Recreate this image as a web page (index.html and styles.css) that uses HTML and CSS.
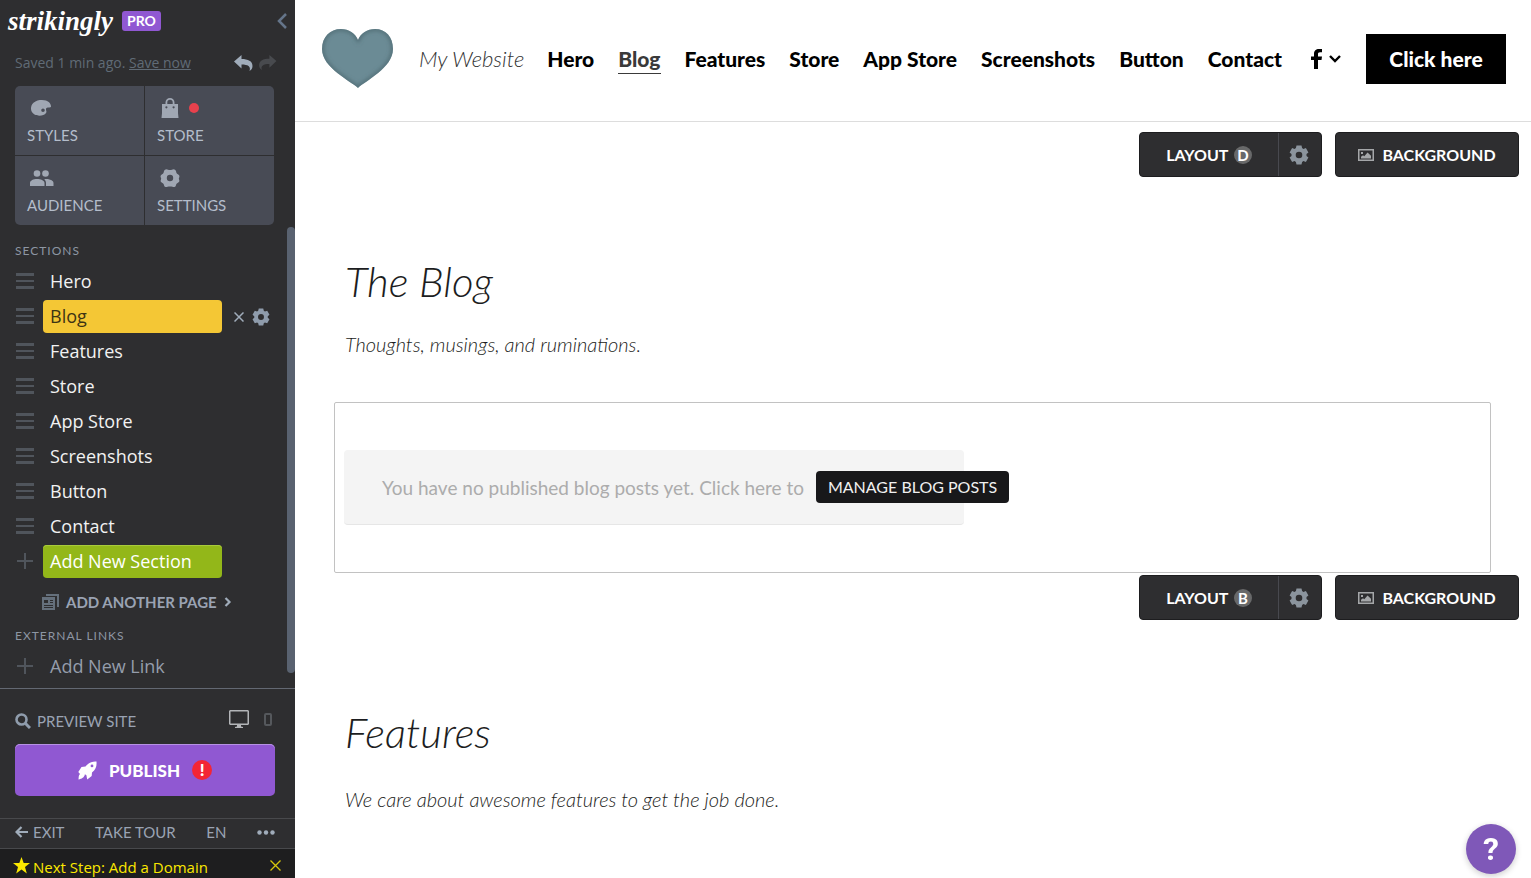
FILE: index.html
```html
<!DOCTYPE html>
<html lang="en">
<head>
    <meta charset="utf-8">
    <title>My Website - Strikingly Editor</title>
    <link rel="stylesheet" href="styles.css">
</head>
<body>

<!-- shared icons -->
<svg class="sprite" aria-hidden="true">
    <symbol id="gear" viewBox="0 0 20 20">
        <path fill-rule="evenodd" d="M7.500 0.500h5l.6 2.600 1.300.8 2.500-.8 2.500 4.300-1.900 1.700v1.800l1.900 1.700-2.500 4.300-2.500-.8-1.300.8-.6 2.600h-5l-.6-2.600-1.300-.8-2.500.8-2.500-4.300 1.900-1.700V9.100L.6 7.400l2.500-4.300 2.500.8 1.300-.8zM10 6.700a3.300 3.300 0 1 0 0 6.600 3.300 3.300 0 0 0 0-6.600z"/>
    </symbol>
    <symbol id="bars" viewBox="0 0 18 16">
        <path d="M0 0h18v3H0zM0 7h18v2H0zM0 13h18v3H0z"/>
    </symbol>
    <symbol id="plus" viewBox="0 0 18 16">
        <path d="M8 0h2v7h7v2h-7v7H8V9H1V7h7z"/>
    </symbol>
    <symbol id="undo" viewBox="0 0 19 16">
        <path d="M0 6.500L7.500 0v4C14 4 18.500 6 18.500 11c0 2-1 4-3 5 1.600-4.500-1.500-6.500-8-6.500v4z"/>
    </symbol>
    <symbol id="picture" viewBox="0 0 16 12">
        <path fill-rule="evenodd" d="M0 0h16v12H0zM1.500 1.500v9h13v-9zM3 9.500V7.800l2-1.500 1.300 1L9.500 3.500 13 6.800v2.700zM3 3h2v2H3z"/>
    </symbol>
</svg>

<div class="editor">
    <aside class="sidebar">
        <div class="brand">
            <span class="logo">strikingly</span>
            <span class="pro">PRO</span>
            <button class="collapse" aria-label="Collapse">
                <svg width="10" height="16" viewBox="0 0 10 16"><path d="M9 1L2 8l7 7" fill="none" stroke="#65758a" stroke-width="2.500"/></svg>
            </button>
        </div>

        <div class="saved">
            <span>Saved 1 min ago. <a href="#">Save now</a></span>
            <div class="history">
                <button aria-label="Undo"><svg width="19" height="16" fill="#a0acba"><use href="#undo"/></svg></button>
                <button aria-label="Redo"><svg width="18" height="15" viewBox="0 0 19 16" fill="#484a4e"><path d="M18.500 6.500L11 0v4C4.500 4 0 6 0 11c0 2 1 4 3 5-1.600-4.500 1.500-6.500 8-6.500v4z"/></svg></button>
            </div>
        </div>

        <div class="tiles">
            <button class="tile">
                <span class="tile-icon">
                    <svg width="22" height="18" viewBox="0 0 22 18"><path fill-rule="evenodd" d="M12 1c6 0 9 3 9 7-2 1-5-.5-5 2.500 0 1.500 1 2 0 3.500-2 3-8 3.500-11.500 1.500C0 13 0 7 3.500 3.800 6 1.500 9 1 12 1zm1 8.500a1.800 1.800 0 1 0 0 3.600 1.800 1.800 0 0 0 0-3.600z"/></svg>
                </span>
                STYLES
            </button>
            <button class="tile">
                <span class="tile-icon">
                    <svg width="20" height="22" viewBox="0 0 20 22"><path fill-rule="evenodd" d="M2 7h3.500V5.500a4.500 4.500 0 0 1 9 0V7H18v9l.5 5h-17L2 16zm5.300 0h5.400V5.500a2.700 2.700 0 0 0-5.400 0zM6.400 9.200a1.100 1.100 0 1 0 0 2.200 1.100 1.100 0 0 0 0-2.200zm7.200 0a1.100 1.100 0 1 0 0 2.200 1.100 1.100 0 0 0 0-2.200z"/></svg>
                    <span class="dot"></span>
                </span>
                STORE
            </button>
            <button class="tile">
                <span class="tile-icon">
                    <svg width="24" height="18" viewBox="0 0 24 18"><circle cx="7" cy="4.500" r="3.300"/><circle cx="15.500" cy="4.500" r="3.300"/><path d="M0 17v-3c0-2.500 3.500-4 7-4s7.500 1.500 7.500 4v3zM16 17v-3c0-1.500-.6-2.800-1.800-3.800C19 9.700 23.500 11.500 23.500 14v3z"/></svg>
                </span>
                AUDIENCE
            </button>
            <button class="tile">
                <span class="tile-icon"><svg width="20" height="20" viewBox="0 0 20 20"><path fill-rule="evenodd" d="M6.500 1.200c1 0 2 .9 3.500.9s2.500-.9 3.500-.9 2.300.9 2.500 1.800c.2 1.700.6 2.400 1.900 3.300 1.600 1 1.900 2 1.300 3.200-.5 1-.5 1.500 0 2.500.5 1.200 0 2.200-1.600 3-1.300.8-1.500 1.400-1.700 2.500-.4 1.500-2 1.800-3.400 1.300-1.500-.5-3.500-.5-5 0-1.400.5-3 .2-3.400-1.300-.2-1.100-.4-1.700-1.700-2.500-1.600-.8-2.100-1.800-1.600-3 .5-1 .5-1.500 0-2.500C.2 8.300.5 7.300 2.100 6.300 3.400 5.400 3.800 4.700 4 3c.2-.9 1.500-1.800 2.500-1.800zM10 6.800a3.200 3.200 0 1 0 0 6.400 3.200 3.200 0 0 0 0-6.400z"/></svg></span>
                SETTINGS
            </button>
        </div>

        <nav class="sections">
            <h3>SECTIONS</h3>
            <ul>
                <li><svg class="handle"><use href="#bars"/></svg><a href="#">Hero</a></li>
                <li class="current">
                    <svg class="handle"><use href="#bars"/></svg><a href="#">Blog</a>
                    <button aria-label="Remove"><svg width="10" height="10" viewBox="0 0 10 10"><path d="M0.500 0.500l9 9M9.500 0.500l-9 9" stroke="#a0acba" stroke-width="1.500"/></svg></button>
                    <button aria-label="Section settings"><svg width="18" height="18" fill="#8f9cac"><use href="#gear"/></svg></button>
                </li>
                <li><svg class="handle"><use href="#bars"/></svg><a href="#">Features</a></li>
                <li><svg class="handle"><use href="#bars"/></svg><a href="#">Store</a></li>
                <li><svg class="handle"><use href="#bars"/></svg><a href="#">App Store</a></li>
                <li><svg class="handle"><use href="#bars"/></svg><a href="#">Screenshots</a></li>
                <li><svg class="handle"><use href="#bars"/></svg><a href="#">Button</a></li>
                <li><svg class="handle"><use href="#bars"/></svg><a href="#">Contact</a></li>
                <li class="add"><svg class="handle"><use href="#plus"/></svg><button>Add New Section</button></li>
            </ul>
            <button class="add-page">
                <svg width="17" height="16" viewBox="0 0 17 16" fill="#65707c"><path fill-rule="evenodd" d="M4 0h13v13h-2V2H4zM0 3h13v13H0zM2 6v3h4V6zm6 0v1h3V6zm0 2v1h3V8zm-6 3v1h9v-1zm0 2v1h9v-1z"/></svg>
                ADD ANOTHER PAGE
                <svg width="8" height="10" viewBox="0 0 8 10"><path d="M1.500 1l4 4-4 4" fill="none" stroke="#a0acba" stroke-width="2.200"/></svg>
            </button>
            <h3>EXTERNAL LINKS</h3>
            <ul>
                <li class="add-link"><svg class="handle"><use href="#plus"/></svg><a href="#">Add New Link</a></li>
            </ul>
            <span class="scrollbar"></span>
        </nav>

        <div class="publish-area">
            <div class="preview">
                <button>
                    <svg width="16" height="16" viewBox="0 0 16 16" fill="none" stroke="#8f9cac"><circle cx="6.500" cy="6.500" r="5" stroke-width="2.600"/><path d="M10.500 10.500l4.500 4.500" stroke-width="3"/></svg>
                    PREVIEW SITE
                </button>
                <div class="devices">
                    <button aria-label="Desktop"><svg width="20" height="18" viewBox="0 0 20 18" fill="#b3b5b8"><path fill-rule="evenodd" d="M1 0h18l1 1v13l-1 1h-7v1.500l2 .5v1H6v-1l2-.5V15H1l-1-1V1zM1.500 1.500v12h17v-12z"/></svg></button>
                    <button aria-label="Mobile"><svg width="8" height="13" viewBox="0 0 8 13"><rect x="1" y="1" width="6" height="11" rx="1" fill="none" stroke="#55585c" stroke-width="2"/></svg></button>
                </div>
            </div>
            <button class="publish">
                <svg width="19" height="19" viewBox="0 0 19 19" fill="#fff"><path fill-rule="evenodd" d="M18.500.5c.4 5-.7 8-4.500 11l-.3 3.500-4.500 3.500-.8-4.200-1.500-1c-.5 3.300-3.200 4.600-6.400 5.200.3-2.500 0-4.300 1.500-5.500L.3 11 3.500 6l4-.5C10.500 1.800 13.500.2 18.500.5zM14 3.500a1.400 1.400 0 1 0 0 2.800 1.400 1.400 0 0 0 0-2.800z"/></svg>
                PUBLISH
                <span class="alert">!</span>
            </button>
        </div>

        <div class="links">
            <a href="#"><svg width="13" height="12" viewBox="0 0 13 12"><path d="M6.500 1L1.500 6l5 5M2 6h11" fill="none" stroke="#a0acba" stroke-width="2.200"/></svg>EXIT</a>
            <a href="#">TAKE TOUR</a>
            <a href="#">EN</a>
            <button aria-label="More"><svg width="18" height="5" viewBox="0 0 18 5" fill="#a0acba"><circle cx="2.500" cy="2.500" r="2.200"/><circle cx="9" cy="2.500" r="2.200"/><circle cx="15.500" cy="2.500" r="2.200"/></svg></button>
        </div>

        <div class="next-step">
            <svg width="17" height="17" viewBox="0 0 17 17" fill="#fbe800"><path d="M8.500 0l2.200 6H17l-5 3.900 1.800 6.600-5.300-4-5.300 4L5 9.900 0 6h6.300z"/></svg>
            <a href="#">Next Step: Add a Domain</a>
            <button aria-label="Close"><svg width="11" height="11" viewBox="0 0 11 11"><path d="M.5.5l10 10M10.500.5l-10 10" stroke="#d8c80c" stroke-width="1.300"/></svg></button>
        </div>
    </aside>

    <main class="site">
        <header class="site-header">
            <svg width="72" height="62" viewBox="0 0 72 62">
                <defs>
                    <clipPath id="heart"><path d="M36 60C29 53 0 40 0 21 0 9 8 1 19 1c8 0 14 4 17 11C39 5 45 1 53 1c11 0 18 8 18 20 0 19-28 32-35 39z"/></clipPath>
                    <filter id="soft"><feGaussianBlur stdDeviation="2"/></filter>
                </defs>
                <g clip-path="url(#heart)">
                    <rect width="72" height="62" fill="#6b8b95"/>
                    <path d="M36 60C29 53 0 40 0 21 0 9 8 1 19 1c8 0 14 4 17 11C39 5 45 1 53 1c11 0 18 8 18 20 0 19-28 32-35 39z" fill="none" stroke="#4c666e" stroke-width="3" filter="url(#soft)"/>
                </g>
            </svg>
            <a class="site-title" href="#">My Website</a>
            <nav class="menu">
                <a href="#">Hero</a>
                <a class="active" href="#">Blog</a>
                <a href="#">Features</a>
                <a href="#">Store</a>
                <a href="#">App Store</a>
                <a href="#">Screenshots</a>
                <a href="#">Button</a>
                <a href="#">Contact</a>
            </nav>
            <button class="social" aria-label="Facebook">
                <svg width="11" height="20" viewBox="0 0 11 20"><path d="M3 20v-9H0V7.500h3V5C3 1.500 5 0 8 0h3v3.300H9C7.500 3.300 7 4 7 5v2.500h4L10.500 11H7v9z"/></svg>
                <svg width="12" height="8" viewBox="0 0 12 8"><path d="M1 1l5 5 5-5" fill="none" stroke="#000" stroke-width="2.400"/></svg>
            </button>
            <a class="cta" href="#">Click here</a>
        </header>

        <section class="block">
            <div class="tools">
                <div class="split">
                    <button class="layout">LAYOUT <span>D</span></button>
                    <button class="gear" aria-label="Layout settings"><svg width="20" height="20"><use href="#gear"/></svg></button>
                </div>
                <button class="background"><svg width="16" height="12"><use href="#picture"/></svg>BACKGROUND</button>
            </div>
            <h1>The Blog</h1>
            <p class="tagline">Thoughts, musings, and ruminations.</p>
            <div class="posts">
                <div class="empty">
                    <span>You have no published blog posts yet. Click here to</span>
                    <button>MANAGE BLOG POSTS</button>
                </div>
            </div>
        </section>

        <section class="block features">
            <div class="tools">
                <div class="split">
                    <button class="layout">LAYOUT <span>B</span></button>
                    <button class="gear" aria-label="Layout settings"><svg width="20" height="20"><use href="#gear"/></svg></button>
                </div>
                <button class="background"><svg width="16" height="12"><use href="#picture"/></svg>BACKGROUND</button>
            </div>
            <h1>Features</h1>
            <p class="tagline">We care about awesome features to get the job done.</p>
        </section>
    </main>
</div>

<button class="help" aria-label="Help">?</button>

</body>
</html>
```
FILE: styles.css
```css
* {
    box-sizing: border-box;
}

body {
    margin: 0;
    background-color: #fff;
    font-family: Lato, "Liberation Sans", sans-serif;
}

a {
    color: inherit;
    text-decoration: none;
}

button {
    padding: 0;
    border: none;
    background: none;
    color: inherit;
    font: inherit;
    cursor: pointer;
}

svg {
    display: block;
    flex: none;
}

ul {
    margin: 0;
    padding: 0;
    list-style: none;
}

.sprite {
    position: absolute;
    width: 0;
    height: 0;
}

.editor {
    display: flex;
    height: 100vh;
    overflow: hidden;
}

/* sidebar */
.sidebar {
    display: flex;
    flex-direction: column;
    flex: none;
    width: 295px;
    background-color: #2e2e30;
    color: #9aa3b3;
}

.brand {
    display: flex;
    align-items: center;
    gap: 9px;
    height: 42px;
    padding: 0 8px;
}

.logo {
    color: #fff;
    font: italic bold 27px "Liberation Serif", serif;
}

.pro {
    padding: 0 5px;
    border-radius: 3px;
    background-color: #9058d2;
    color: #fff;
    font-size: 14px;
    font-weight: bold;
    line-height: 20px;
}

.collapse {
    margin-left: auto;
}

.saved {
    display: flex;
    align-items: center;
    justify-content: space-between;
    height: 44px;
    padding: 0 18px 3px 15px;
    color: #606b76;
    font: 14px "Open Sans", sans-serif;
}

.saved a {
    text-decoration: underline;
}

.history {
    display: flex;
    align-items: center;
    gap: 6px;
}

.tiles {
    display: grid;
    grid-template-columns: 1fr 1fr;
    gap: 1px;
    flex: none;
    margin: 0 21px 0 15px;
    border-radius: 5px;
    overflow: hidden;
}

.tile {
    height: 69px;
    padding: 5px 12px 8px;
    background-color: #484b55;
    color: #b4bdcb;
    font-size: 15px;
    text-align: left;
}

.tile svg {
    fill: #a0a7b3;
}

.tile-icon {
    display: flex;
    align-items: center;
    gap: 9px;
    height: 26px;
    margin-bottom: 5px;
    padding-left: 3px;
}

.dot {
    width: 10px;
    height: 10px;
    border-radius: 50%;
    background-color: #e8414d;
}

.sections {
    position: relative;
    flex: 1;
    overflow: hidden;
}

.sections h3 {
    margin: 0;
    padding: 15px 15px 3px;
    color: #8d96a3;
    font-size: 12px;
    font-weight: normal;
    letter-spacing: 1px;
    line-height: 21px;
}

.sections li {
    display: flex;
    align-items: center;
    height: 35px;
    padding-left: 16px;
    color: #f2f2f2;
    font: 18px "Open Sans", sans-serif;
}

.handle {
    width: 18px;
    height: 16px;
    margin-bottom: 1px;
    fill: #50555c;
}

.sections li a, .add button {
    width: 179px;
    margin-left: 9px;
    padding-left: 7px;
    border-radius: 4px;
    line-height: 33px;
    text-align: left;
}

.current a {
    background-color: #f4c735;
    color: #3d3414;
}

.sections li.current button {
    margin-left: 12px;
}

.sections li.current button + button {
    margin-left: 8px;
}

.add button {
    background-color: #93b719;
    box-shadow: inset 0 1px #a9cb3b;
    color: #fff;
}

.sections li.add-link {
    color: #959dab;
}

.add-page {
    display: flex;
    align-items: center;
    gap: 7px;
    margin-left: 42px;
    padding-top: 13px;
    font-size: 15px;
    font-weight: bold;
    line-height: 20px;
}

.add-page + h3 {
    padding-top: 13px;
}

.scrollbar {
    position: absolute;
    top: 2px;
    right: 0;
    bottom: 15px;
    width: 8px;
    border-radius: 4px;
    background-color: #596270;
}

.publish-area {
    height: 130px;
    padding: 19px 20px 0 15px;
    border-top: 1px solid #636872;
}

.preview {
    display: flex;
    align-items: center;
    justify-content: space-between;
    height: 26px;
    margin-bottom: 10px;
    font-size: 15px;
}

.preview > button {
    display: flex;
    align-items: center;
    gap: 6px;
}

.devices {
    display: flex;
    align-items: center;
    gap: 15px;
    padding: 0 3px 4px 0;
}

.publish {
    display: flex;
    align-items: center;
    justify-content: center;
    gap: 12px;
    width: 100%;
    height: 52px;
    border-radius: 5px;
    background-color: #9058d2;
    box-shadow: inset 0 1px #b792e4;
    color: #fff;
    font-size: 17px;
    font-weight: 900;
}

.alert {
    width: 20px;
    border-radius: 50%;
    background-color: #f32535;
    line-height: 20px;
}

.links {
    display: flex;
    align-items: center;
    justify-content: space-between;
    height: 30px;
    padding: 0 20px 3px 15px;
    border-top: 1px solid #48494c;
    font-size: 15px;
}

.links a:first-child {
    display: flex;
    align-items: center;
    gap: 5px;
}

.next-step {
    display: flex;
    align-items: center;
    gap: 3px;
    height: 30px;
    padding: 4px 14px 0 13px;
    border-top: 1px solid #48494c;
    background-color: #1e1e1f;
    color: #fbe800;
    font: 15px "Open Sans", sans-serif;
}

.next-step a {
    padding-top: 2px;
}

.next-step button {
    margin-left: auto;
}

/* site being edited */
.site {
    flex: 1;
    min-width: 0;
    overflow: hidden;
}

.site-header {
    display: flex;
    align-items: center;
    height: 122px;
    padding: 0 25px 4px 27px;
    border-bottom: 1px solid #ddd;
}

.site-title {
    margin-left: 25px;
    color: #333;
    font-size: 22px;
    font-style: italic;
    font-weight: 300;
    white-space: nowrap;
}

.menu {
    display: flex;
    gap: 24px;
    margin-left: auto;
    font-size: 21px;
    font-weight: 900;
    line-height: 28px;
    white-space: nowrap;
}

.active {
    color: #3a3a3a;
    box-shadow: 0 1px #3a3a3a;
}

.social {
    display: flex;
    align-items: center;
    gap: 7px;
    margin: 0 25px 0 29px;
}

.cta {
    width: 140px;
    background-color: #000;
    color: #fff;
    font-size: 21px;
    font-weight: 900;
    line-height: 50px;
    text-align: center;
}

.block {
    height: 453px;
    padding: 10px 40px 0 39px;
}

.features {
    padding-top: 0;
}

.tools {
    display: flex;
    justify-content: flex-end;
    gap: 13px;
    height: 45px;
    margin-right: -28px;
    color: #fff;
    font-size: 16px;
    font-weight: bold;
}

.split, .background {
    border: 1px solid #1d1d1f;
    border-radius: 4px;
    background-color: #2e2e30;
}

.split {
    display: flex;
    width: 183px;
}

.layout {
    flex: 1;
}

.layout span {
    display: inline-block;
    width: 18px;
    margin-left: 2px;
    border-radius: 50%;
    background-color: #68696a;
    font-size: 15px;
    line-height: 18px;
}

.gear {
    width: 43px;
    padding-left: 10px;
    border-left: 1px solid #48494f;
}

.gear svg {
    fill: #8b949d;
}

.background {
    display: flex;
    align-items: center;
    justify-content: center;
    gap: 8px;
    width: 184px;
}

.background svg {
    fill: #a5a7a9;
}

.block h1 {
    margin: 72px 0 0 11px;
    color: #1c1d21;
    font-size: 42px;
    font-style: italic;
    font-weight: 300;
    line-height: 64px;
}

.tagline {
    margin: 14px 0 41px 11px;
    color: #1c1d21;
    font-size: 20px;
    font-style: italic;
    font-weight: 300;
    line-height: 34px;
}

.features h1 {
    margin-top: 80px;
}

.features .tagline {
    margin-top: 18px;
}

.posts {
    height: 171px;
    padding: 47px 9px;
    border: 1px solid #c2c2c2;
    border-radius: 2px;
}

.empty {
    display: flex;
    align-items: center;
    gap: 12px;
    width: 620px;
    height: 75px;
    padding-left: 38px;
    border-bottom: 1px solid #e6e6e6;
    border-radius: 4px;
    background-color: #f4f4f4;
    color: #acacac;
    font-size: 19px;
    white-space: nowrap;
}

.empty button {
    flex: none;
    width: 193px;
    border-radius: 4px;
    background-color: #18181a;
    color: #f0f0f0;
    font-size: 16px;
    line-height: 32px;
}

.help {
    position: fixed;
    right: 15px;
    bottom: 4px;
    width: 50px;
    height: 50px;
    border-radius: 50%;
    background-color: #7f58b8;
    box-shadow: 0 2px 6px rgba(0, 0, 0, 0.2);
    color: #fff;
    font: bold 32px Roboto, sans-serif;
}
```
